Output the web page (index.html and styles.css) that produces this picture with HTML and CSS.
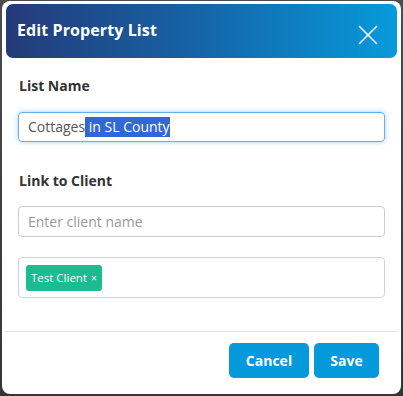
FILE: index.html
```html
<!DOCTYPE html>
<html>
<head>
<meta charset="utf-8">
<link rel="stylesheet" href="styles.css">
</head>
<body>
<div class="modal">
  <div class="modal-header">
    <h1 class="title">Edit Property List</h1>
    <svg class="close" width="20" height="20" viewBox="0 0 20 20"><path d="M1 1 L19 19 M19 1 L1 19" stroke="#fff" stroke-width="1.6" fill="none"/></svg>
  </div>
  <div class="modal-body">
    <label class="label">List Name</label>
    <div class="input focus"><span>Cottages</span><span class="sel"> in SL County</span></div>
    <label class="label second">Link to Client</label>
    <div class="input placeholder">Enter client name</div>
    <div class="tagbox"><span class="tag">Test Client <span class="x">×</span></span></div>
  </div>
  <div class="modal-footer">
    <button class="btn">Cancel</button>
    <button class="btn">Save</button>
  </div>
</div>
</body>
</html>
```
FILE: styles.css
```css
html, body { margin: 0; padding: 0; }
body {
  background: linear-gradient(#4c4c4c, #353535);
  width: 403px;
  height: 396px;
  font-family: "Open Sans", "Noto Sans", sans-serif;
  padding-top: 1px;
  box-sizing: border-box;
}
.modal {
  margin: 0 2px;
  width: 399px;
  height: 393px;
  background: #fff;
  border-radius: 8px;
  padding: 3px 4px 0;
  box-sizing: border-box;
  display: flex;
  flex-direction: column;
}
.modal-header {
  height: 54px;
  border-radius: 7px;
  background: linear-gradient(to right, #253a78, #1565a8 50%, #069bdb);
  display: flex;
  align-items: center;
  justify-content: space-between;
  padding: 0 19px 0 11px;
  box-sizing: border-box;
}
.title {
  margin: 0;
  color: #fff;
  font-size: 16px;
  font-weight: 700;
  letter-spacing: 0.1px;
  position: relative;
  top: -1px;
}
.close { display: block; margin-top: 8px; }
.modal-body {
  padding: 18px 12px 0;
  display: flex;
  flex-direction: column;
  height: 273px;
  box-sizing: border-box;
}
.label {
  font-size: 14px;
  font-weight: 700;
  color: #333;
  line-height: 20px;
  height: 20px;
  padding-left: 1px;
}
.label.second { margin-top: 29px; }
.input {
  margin-top: 16px;
  height: 30px;
  border: 1px solid #ccc;
  border-radius: 4px;
  box-sizing: border-box;
  padding: 0 9px;
  font-size: 14px;
  line-height: 28px;
  color: #555;
  white-space: pre;
}
.input.focus {
  border-color: #66afe9;
  box-shadow: 0 0 5px rgba(102, 175, 233, 0.6);
}
.sel {
  background: #3367d6;
  color: #fff;
  display: inline-block;
  line-height: 20px;
  vertical-align: middle;
  position: relative;
  top: -1px;
}
.input.placeholder {
  margin-top: 15px;
  height: 31px;
  line-height: 29px;
  color: #999;
  font-size: 14px;
}
.tagbox {
  margin-top: 20px;
  height: 41px;
  border: 1px solid #d4d4d4;
  border-radius: 4px;
  box-sizing: border-box;
  padding: 7px;
  display: flex;
  align-items: flex-start;
}
.tag {
  background: #1bbc91;
  color: #fff;
  font-size: 11.5px;
  height: 26px;
  line-height: 26px;
  padding: 0 5px 0 5px;
  border-radius: 3px;
}
.tag .x { font-size: 10px; margin-left: 1px; }
.modal-footer {
  border-top: 1px solid #e2e2e2;
  margin: 0 -1px;
  padding: 11px 19px 0 0;
  display: flex;
  justify-content: flex-end;
  gap: 5px;
}
.btn {
  height: 35px;
  border: none;
  border-radius: 5px;
  background: #0399db;
  color: #fff;
  font-family: "Open Sans", sans-serif;
  font-weight: 700;
  font-size: 14px;
  padding: 0;
  width: 80px;
}
.btn + .btn { width: 65px; }
```
